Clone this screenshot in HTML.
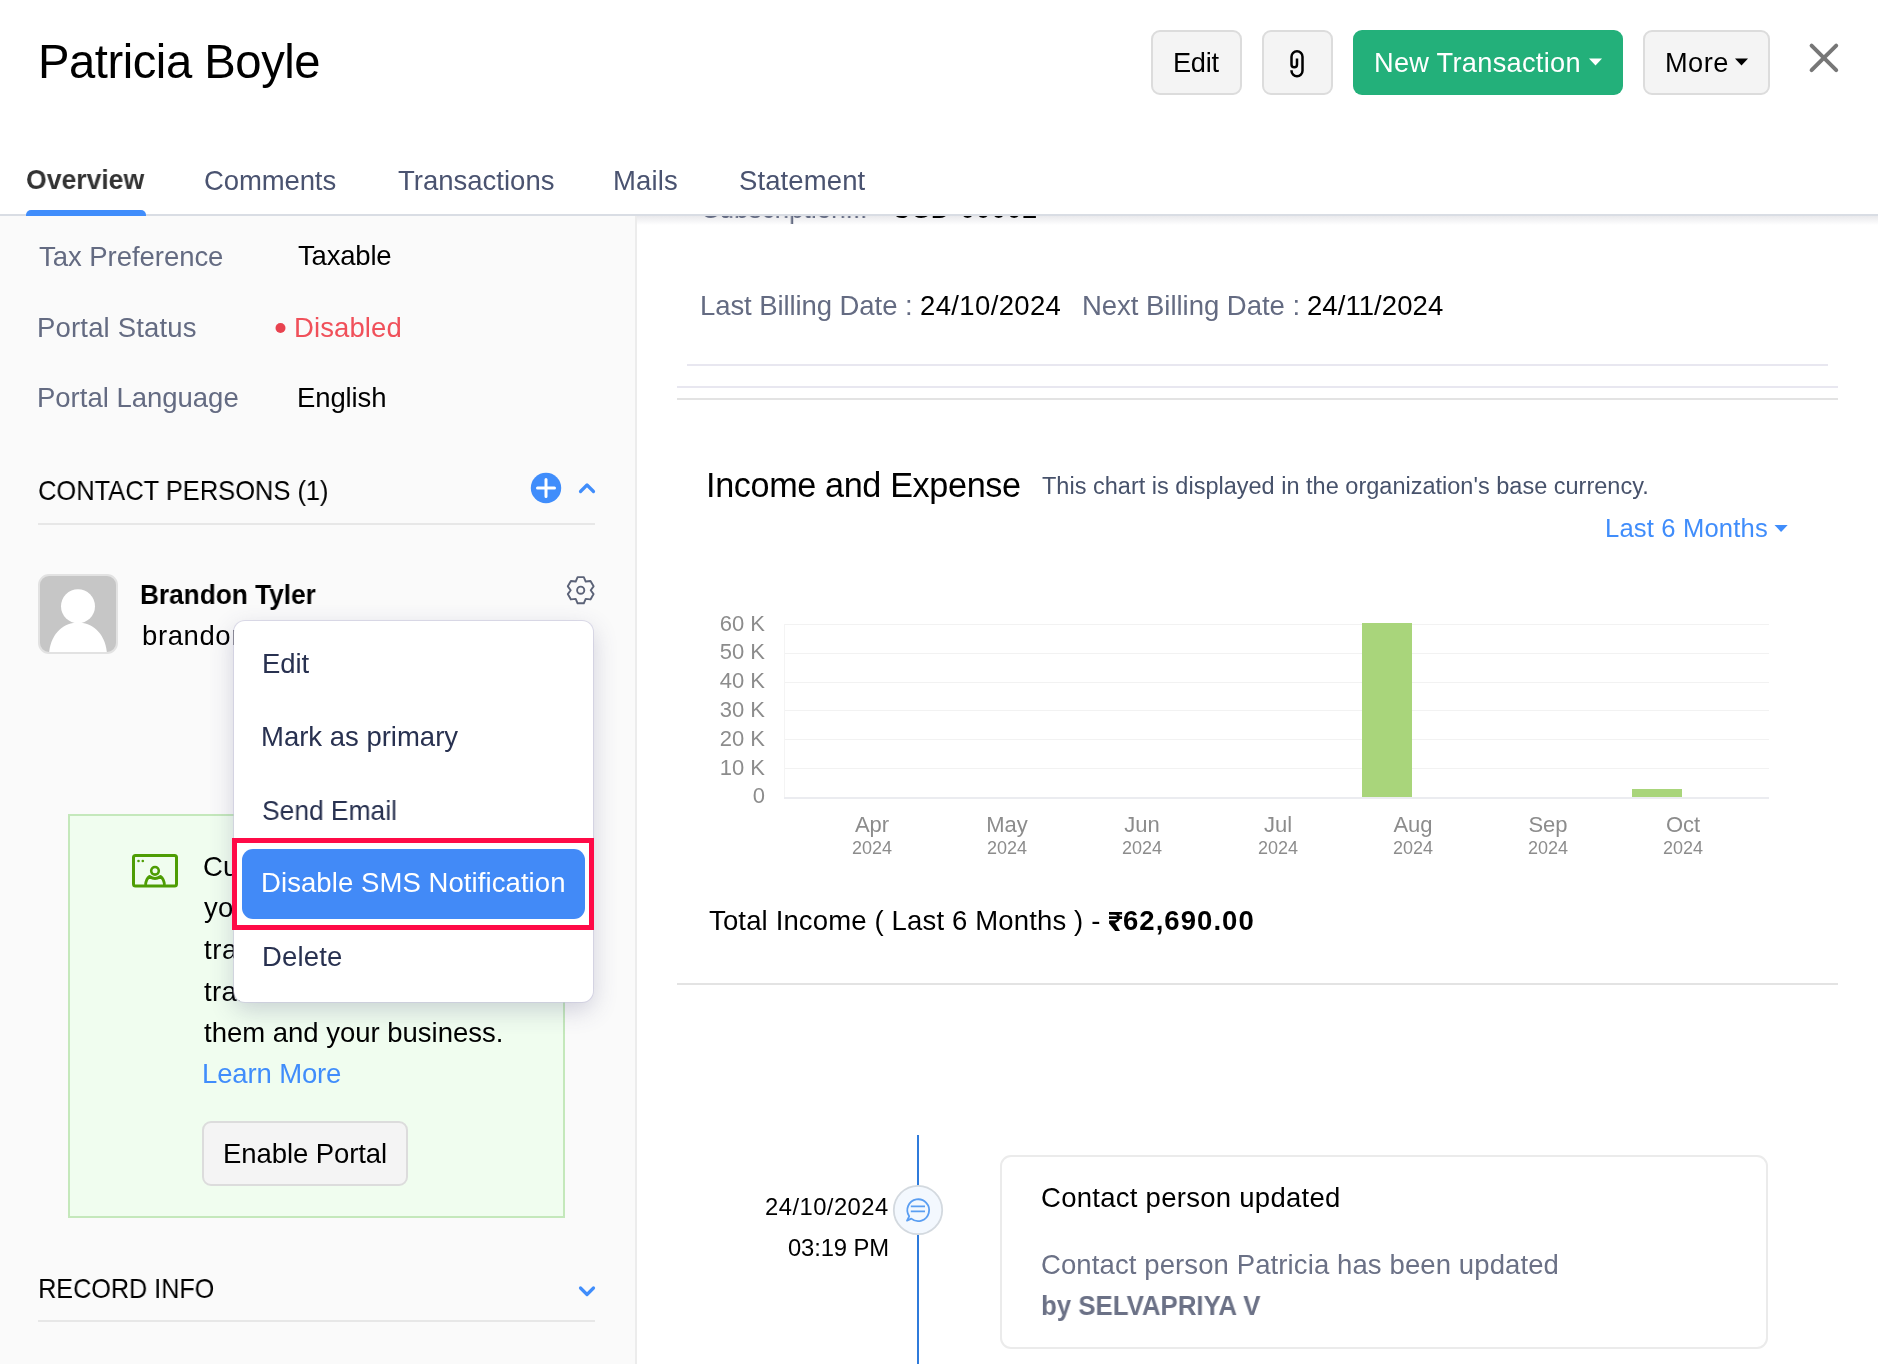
<!DOCTYPE html>
<html><head><meta charset="utf-8"><style>
*{margin:0;padding:0;box-sizing:border-box}
html,body{width:1878px;height:1364px;overflow:hidden;background:#fff}
body{font-family:"Liberation Sans",sans-serif}
#root{position:relative;width:1878px;height:1364px;overflow:hidden;background:#fff}
.a{position:absolute}
.t{position:absolute;white-space:nowrap;line-height:1;font-family:"Liberation Sans",sans-serif;will-change:transform}
.btn{position:absolute;top:30px;height:64.6px;border:2px solid #dcdcdc;background:#f4f4f4;border-radius:9px}
.hl{position:absolute;height:2px}
.yl{position:absolute;width:60px;text-align:right;font-size:22px;color:#8c8c8c;line-height:1;white-space:nowrap;will-change:transform}
.xm{position:absolute;width:100px;text-align:center;font-size:22px;color:#8c8c8c;line-height:1;white-space:nowrap;will-change:transform}
.xy{position:absolute;width:100px;text-align:center;font-size:18px;color:#8c8c8c;line-height:1;white-space:nowrap;will-change:transform}
.grid{position:absolute;left:784px;width:985px;height:1px;background:#f2f2f2}

</style></head><body><div id="root">
<!-- left panel bg -->
<div class="a" style="left:0;top:216px;width:635px;height:1148px;background:#fafafa"></div>
<div class="a" style="left:635px;top:216px;width:2px;height:1148px;background:#ececec"></div>
<!-- right header shadow -->
<div class="a" style="left:637px;top:216px;width:1241px;height:9px;background:linear-gradient(#e9e9ec,rgba(255,255,255,0))"></div>
<div class="a" style="left:637px;top:216px;width:1241px;height:20px;overflow:hidden"><div class="a" style="left:-637px;top:-216px;width:1878px;height:300px"><div class="t" style="left:701.5px;top:194.7px;font-size:27.5px;color:#646b82;font-weight:400;transform:scaleX(0.9492);transform-origin:1.0px 0;">Subscription...</div>
<div class="t" style="left:892.0px;top:194.7px;font-size:27.5px;color:#000;font-weight:400;letter-spacing:0.201px;">USD-00002</div></div></div>
<!-- tab border -->
<div class="a" style="left:0;top:214px;width:1878px;height:2px;background:#d9dde4"></div>
<div class="a" style="left:26px;top:210px;width:120px;height:6px;background:#408dfb;border-radius:5px 5px 0 0"></div>
<!-- header buttons -->
<div class="btn" style="left:1151px;width:91px"></div>
<div class="btn" style="left:1262px;width:71px"></div>
<div class="a" style="left:1353px;top:30px;width:270px;height:64.6px;background:#23b07a;border-radius:9px"></div>
<div class="btn" style="left:1643px;width:127px"></div>
<svg class="a" style="left:0;top:0" width="1878" height="216">
  <path d="M1589 58.5h13l-6.5 7z" fill="#fff"/>
  <path d="M1735 58.5h13l-6.5 7z" fill="#000"/>
  <path d="M1811.6 45.6L1836.2 70.2M1836.2 45.6L1811.6 70.2" stroke="#777" stroke-width="4" stroke-linecap="round"/>
  <path d="M1297 58.5V64.5A2.75 2.75 0 0 1 1291.5 64.5V56.8A5.5 5.5 0 0 1 1302.5 56.8V70.8A5.5 5.5 0 0 1 1291.5 70.8V70.2" fill="none" stroke="#000" stroke-width="2.5"/>
</svg>
<!-- left panel icons -->
<svg class="a" style="left:0;top:216px" width="636" height="1148">
  <circle cx="280.5" cy="112" r="5" fill="#e8424f"/>
  <circle cx="546" cy="272" r="15.2" fill="#408dfb"/>
  <path d="M546 263.5v17M537.5 272h17" stroke="#fff" stroke-width="3" stroke-linecap="round"/>
  <path d="M580.5 275.5l6.5-6.5 6.5 6.5" fill="none" stroke="#408dfb" stroke-width="3.2" stroke-linecap="round" stroke-linejoin="round"/>
  <rect x="38" y="307" width="557" height="2" fill="#e7e7e7"/>
  <path d="M580.5 1072l6.5 6.5 6.5-6.5" fill="none" stroke="#408dfb" stroke-width="3.2" stroke-linecap="round" stroke-linejoin="round"/>
  <rect x="38" y="1104" width="557" height="2" fill="#e7e7e7"/>
</svg>
<!-- avatar -->
<div class="a" style="left:38px;top:574px;width:80px;height:80px;border-radius:11px;border:2px solid #e2e2e2;background:#c6c6c6;overflow:hidden">
  <svg width="76" height="76" style="position:absolute;left:0;top:0">
    <path d="M9 78C10.5 56.5 24.5 46.5 38 46.5S65.5 56.5 67 78z" fill="#fff"/>
    <circle cx="38" cy="30.3" r="17" fill="#fff"/>
  </svg>
</div>
<!-- gear -->
<svg class="a" style="left:560px;top:570px" width="42" height="42">
  <path d="M17.60 7.10 L23.80 7.10 L25.70 11.54 L30.49 10.97 L33.59 16.33 L30.70 20.20 L33.59 24.07 L30.49 29.43 L25.70 28.86 L23.80 33.30 L17.60 33.30 L15.70 28.86 L10.91 29.43 L7.81 24.07 L10.70 20.20 L7.81 16.33 L10.91 10.97 L15.70 11.54Z" fill="none" stroke="#5b6277" stroke-width="1.9" stroke-linejoin="round"/>
  <circle cx="20.7" cy="20.2" r="3.6" fill="none" stroke="#5b6277" stroke-width="1.9"/>
</svg>
<!-- banner -->
<div class="a" style="left:68px;top:814px;width:497px;height:404px;background:#f0fdef;border:2px solid #c4e8bb"></div>
<svg class="a" style="left:120px;top:840px" width="70" height="60">
  <rect x="13.5" y="15.5" width="43" height="30.5" rx="2" fill="none" stroke="#4e9d04" stroke-width="3"/>
  <circle cx="18.5" cy="21" r="1.3" fill="#4e9d04"/>
  <circle cx="22.8" cy="21" r="1.3" fill="#4e9d04"/>
  <circle cx="35" cy="30.8" r="3.8" fill="none" stroke="#4e9d04" stroke-width="2.6"/>
  <path d="M25.5 45C26 40 28 37.5 29.5 36.5C31.5 37.8 33 38.5 35 38.5S38.5 37.8 40.5 36.5C42 37.5 44 40 44.5 45" fill="none" stroke="#4e9d04" stroke-width="2.8" stroke-linejoin="round"/>
</svg>
<div class="a" style="left:202px;top:1121px;width:206px;height:65px;border:2px solid #dcdcdc;background:#f4f4f4;border-radius:9px"></div>
<!-- right panel lines -->
<div class="hl" style="left:687px;top:364px;width:1141px;background:#e8e7f0"></div>
<div class="hl" style="left:677px;top:386px;width:1161px;background:#e8e7f0"></div>
<div class="hl" style="left:677px;top:398px;width:1161px;background:#e3e3e3"></div>
<div class="hl" style="left:677px;top:983px;width:1161px;background:#e3e3e3"></div>
<svg class="a" style="left:1770px;top:520px" width="30" height="20">
  <path d="M4.5 5h13.2l-6.6 7z" fill="#408dfb"/>
</svg>
<!-- chart -->
<div class="grid" style="top:623.5px"></div>
<div class="grid" style="top:652.5px"></div>
<div class="grid" style="top:681.5px"></div>
<div class="grid" style="top:710px"></div>
<div class="grid" style="top:739px"></div>
<div class="grid" style="top:768px"></div>
<div class="a" style="left:784px;top:623.5px;width:1px;height:174px;background:#f4f4f4"></div>
<div class="a" style="left:784px;top:797px;width:985px;height:1.5px;background:#ebecf0"></div>
<div class="a" style="left:1362px;top:622.5px;width:50px;height:174px;background:#a9d57b"></div>
<div class="a" style="left:1631.5px;top:789px;width:50px;height:7.5px;background:#a9d57b"></div>
<div class="yl" style="left:705px;top:612.5px">60 K</div>
<div class="yl" style="left:705px;top:641.3px">50 K</div>
<div class="yl" style="left:705px;top:670.1px">40 K</div>
<div class="yl" style="left:705px;top:698.9px">30 K</div>
<div class="yl" style="left:705px;top:727.7px">20 K</div>
<div class="yl" style="left:705px;top:756.5px">10 K</div>
<div class="yl" style="left:705px;top:785.3px">0</div>
<div class="xm" style="left:821.7px;top:814.3px">Apr</div>
<div class="xy" style="left:821.7px;top:838.8px">2024</div>
<div class="xm" style="left:957.0px;top:814.3px">May</div>
<div class="xy" style="left:957.0px;top:838.8px">2024</div>
<div class="xm" style="left:1092.2px;top:814.3px">Jun</div>
<div class="xy" style="left:1092.2px;top:838.8px">2024</div>
<div class="xm" style="left:1227.5px;top:814.3px">Jul</div>
<div class="xy" style="left:1227.5px;top:838.8px">2024</div>
<div class="xm" style="left:1362.8px;top:814.3px">Aug</div>
<div class="xy" style="left:1362.8px;top:838.8px">2024</div>
<div class="xm" style="left:1498.1px;top:814.3px">Sep</div>
<div class="xy" style="left:1498.1px;top:838.8px">2024</div>
<div class="xm" style="left:1633.3px;top:814.3px">Oct</div>
<div class="xy" style="left:1633.3px;top:838.8px">2024</div>
<!-- timeline -->
<div class="a" style="left:917px;top:1135px;width:2px;height:229px;background:#2f7bdb"></div>
<svg class="a" style="left:890px;top:1180px" width="56" height="60">
  <circle cx="28" cy="30" r="24.2" fill="#f3f8fe" stroke="#d3d9df" stroke-width="1.8"/>
  <path d="M17 40.6L21.3 38.6A10.9 10.9 0 1 0 19.2 36.3z" fill="#f3f8fe" stroke="#5a9ef2" stroke-width="1.8" stroke-linejoin="round"/>
  <path d="M20.8 26.3h14.2M20.8 31.3h14.2" stroke="#5a9ef2" stroke-width="1.8"/>
</svg>
<div class="a" style="left:1000px;top:1155px;width:768px;height:194px;border:2px solid #ebebeb;border-radius:11px;background:#fff"></div>
<svg class="a" style="left:1108.8px;top:911.9px" width="14" height="20">
  <path d="M0 0H13.1V2.6H0z M0 4.3H13.1V6.9H0z" fill="#000"/>
  <path d="M0.3 1.3H4.8C8.2 1.3 9.6 3.2 9.6 5.4C9.6 8 7.6 9.9 4.2 9.9H0.5" fill="none" stroke="#000" stroke-width="2.6"/>
  <path d="M0.2 8.8H4.8L11 19H6.2L0.2 11.4z" fill="#000"/>
</svg>
<div class="t" style="left:38.3px;top:37.8px;font-size:47.2px;color:#000;font-weight:400;letter-spacing:-0.458px;">Patricia Boyle</div>
<div class="t" style="left:1172.7px;top:49.0px;font-size:27.2px;color:#000;font-weight:400;letter-spacing:-0.265px;">Edit</div>
<div class="t" style="left:1373.8px;top:49.0px;font-size:27.2px;color:#fff;font-weight:400;letter-spacing:0.289px;">New Transaction</div>
<div class="t" style="left:1664.5px;top:49.0px;font-size:27.2px;color:#000;font-weight:400;letter-spacing:0.460px;">More</div>
<div class="t" style="left:26.2px;top:166.3px;font-size:27.5px;color:#333;font-weight:700;transform:scaleX(0.9655);transform-origin:1.0px 0;">Overview</div>
<div class="t" style="left:204.0px;top:167.2px;font-size:27.5px;color:#4a5370;font-weight:400;letter-spacing:-0.114px;">Comments</div>
<div class="t" style="left:397.7px;top:167.2px;font-size:27.5px;color:#4a5370;font-weight:400;letter-spacing:0.004px;">Transactions</div>
<div class="t" style="left:613.3px;top:167.2px;font-size:27.5px;color:#4a5370;font-weight:400;letter-spacing:0.120px;">Mails</div>
<div class="t" style="left:738.7px;top:167.2px;font-size:27.5px;color:#4a5370;font-weight:400;letter-spacing:0.112px;">Statement</div>
<div class="t" style="left:39.1px;top:242.5px;font-size:27.5px;color:#646b82;font-weight:400;letter-spacing:-0.043px;">Tax Preference</div>
<div class="t" style="left:298.3px;top:242.4px;font-size:27.5px;color:#000;font-weight:400;letter-spacing:-0.199px;">Taxable</div>
<div class="t" style="left:36.9px;top:313.7px;font-size:27.5px;color:#646b82;font-weight:400;letter-spacing:0.176px;">Portal Status</div>
<div class="t" style="left:294.2px;top:313.7px;font-size:27.5px;color:#f0505a;font-weight:400;letter-spacing:0.098px;">Disabled</div>
<div class="t" style="left:36.9px;top:383.5px;font-size:27.5px;color:#646b82;font-weight:400;letter-spacing:-0.010px;">Portal Language</div>
<div class="t" style="left:296.8px;top:383.5px;font-size:27.5px;color:#000;font-weight:400;letter-spacing:-0.117px;">English</div>
<div class="t" style="left:37.9px;top:476.5px;font-size:27.5px;color:#000;font-weight:400;transform:scaleX(0.9257);transform-origin:1.0px 0;">CONTACT PERSONS (1)</div>
<div class="t" style="left:139.9px;top:580.7px;font-size:27.5px;color:#000;font-weight:700;transform:scaleX(0.9528);transform-origin:1.0px 0;">Brandon Tyler</div>
<div class="t" style="left:141.6px;top:621.5px;font-size:27.5px;color:#000;font-weight:400;letter-spacing:0.591px;">brandon.tyler@zylker.com</div>
<div class="t" style="left:202.7px;top:853.1px;font-size:27.5px;color:#000;font-weight:400;letter-spacing:0.191px;">Customer Portal allows</div>
<div class="t" style="left:203.7px;top:894.2px;font-size:27.5px;color:#000;font-weight:400;letter-spacing:0.213px;">your customers to keep</div>
<div class="t" style="left:203.7px;top:935.8px;font-size:27.5px;color:#000;font-weight:400;letter-spacing:0.607px;">track of all the</div>
<div class="t" style="left:203.7px;top:977.5px;font-size:27.5px;color:#000;font-weight:400;letter-spacing:0.338px;">transactions between</div>
<div class="t" style="left:203.7px;top:1018.7px;font-size:27.5px;color:#000;font-weight:400;letter-spacing:-0.012px;">them and your business.</div>
<div class="t" style="left:201.7px;top:1060.1px;font-size:27.5px;color:#408dfb;font-weight:400;letter-spacing:-0.137px;">Learn More</div>
<div class="t" style="left:223.2px;top:1139.5px;font-size:27.5px;color:#000;font-weight:400;letter-spacing:-0.083px;">Enable Portal</div>
<div class="t" style="left:37.5px;top:1274.5px;font-size:27.5px;color:#000;font-weight:400;transform:scaleX(0.9153);transform-origin:2.0px 0;">RECORD INFO</div>
<div class="t" style="left:699.7px;top:291.7px;font-size:27.5px;color:#646b82;font-weight:400;letter-spacing:-0.081px;">Last Billing Date :</div>
<div class="t" style="left:919.7px;top:291.7px;font-size:27.5px;color:#000;font-weight:400;letter-spacing:0.362px;">24/10/2024</div>
<div class="t" style="left:1081.8px;top:291.7px;font-size:27.5px;color:#646b82;font-weight:400;letter-spacing:-0.029px;">Next Billing Date :</div>
<div class="t" style="left:1307.4px;top:291.7px;font-size:27.5px;color:#000;font-weight:400;letter-spacing:0.067px;">24/11/2024</div>
<div class="t" style="left:706.0px;top:468.1px;font-size:34.2px;color:#000;font-weight:400;letter-spacing:-0.363px;">Income and Expense</div>
<div class="t" style="left:1042.3px;top:474.9px;font-size:23.5px;color:#47526b;font-weight:400;letter-spacing:0.009px;">This chart is displayed in the organization's base currency.</div>
<div class="t" style="left:1605.0px;top:516.0px;font-size:25.6px;color:#408dfb;font-weight:400;letter-spacing:0.161px;">Last 6 Months</div>
<div class="t" style="left:708.8px;top:907.4px;font-size:27.5px;color:#000;font-weight:400;letter-spacing:0.151px;">Total Income ( Last 6 Months ) -</div>
<div class="t" style="left:1122.8px;top:907.4px;font-size:27.5px;color:#000;font-weight:700;letter-spacing:1.044px;">62,690.00</div>
<div class="t" style="left:764.7px;top:1194.7px;font-size:23.8px;color:#000;font-weight:400;letter-spacing:0.459px;">24/10/2024</div>
<div class="t" style="left:788.3px;top:1235.8px;font-size:23.8px;color:#000;font-weight:400;letter-spacing:-0.119px;">03:19 PM</div>
<div class="t" style="left:1041.3px;top:1183.7px;font-size:27.5px;color:#000;font-weight:400;letter-spacing:0.274px;">Contact person updated</div>
<div class="t" style="left:1041.3px;top:1250.5px;font-size:27.5px;color:#6b7186;font-weight:400;letter-spacing:0.108px;">Contact person Patricia has been updated</div>
<div class="t" style="left:1040.6px;top:1292.3px;font-size:27.5px;color:#6b7186;font-weight:700;transform:scaleX(0.9382);transform-origin:1.0px 0;">by SELVAPRIYA V</div>
<!-- menu -->
<div class="a" style="left:234px;top:620.5px;width:359px;height:381px;background:#fff;border-radius:11px;box-shadow:0 0 0 1px rgba(200,198,220,0.6),0 8px 24px rgba(70,70,120,0.24)"></div>
<div class="a" style="left:232px;top:838px;width:362px;height:92px;border:5px solid #ff0a47"></div>
<div class="a" style="left:242px;top:849px;width:343px;height:70px;background:#428af7;border-radius:11px"></div>
<div class="t" style="left:261.8px;top:649.9px;font-size:27.5px;color:#283150;font-weight:400;letter-spacing:-0.115px;">Edit</div>
<div class="t" style="left:261.4px;top:722.9px;font-size:27.5px;color:#283150;font-weight:400;letter-spacing:-0.004px;">Mark as primary</div>
<div class="t" style="left:262.4px;top:796.5px;font-size:27.5px;color:#283150;font-weight:400;transform:scaleX(0.9594);transform-origin:1.0px 0;">Send Email</div>
<div class="t" style="left:261.4px;top:869.2px;font-size:27.5px;color:#fff;font-weight:400;letter-spacing:0.081px;">Disable SMS Notification</div>
<div class="t" style="left:261.8px;top:942.8px;font-size:27.5px;color:#283150;font-weight:400;letter-spacing:0.160px;">Delete</div>

</div></body></html>
